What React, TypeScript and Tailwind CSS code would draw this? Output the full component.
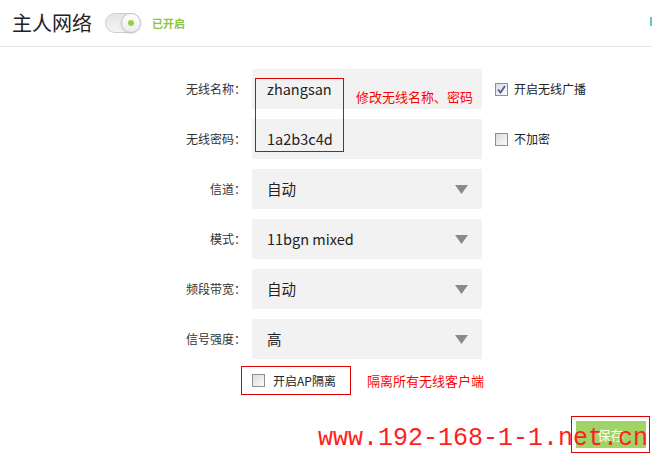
const cjk = { fontFamily: '"Microsoft YaHei", "Noto Sans CJK SC", "Noto Sans", sans-serif' };

function Check({ checked }: { checked?: boolean }) {
  return (
    <span className="inline-flex h-[13px] w-[13px] shrink-0 items-center justify-center border border-[#8e8f8f] bg-gradient-to-br from-[#dcdcdc] to-[#fbfbfb]">
      {checked && (
        <svg width="9" height="9" viewBox="0 0 9 9">
          <path d="M1 4.5 L3.5 7.5 L8 1" fill="none" stroke="#4a5f97" strokeWidth="1.8" />
        </svg>
      )}
    </span>
  );
}

function Arrow() {
  return (
    <svg width="13" height="9" viewBox="0 0 13 9" className="mr-[14px]">
      <path d="M0 0 H13 L6.5 9 Z" fill="#8a8a8a" />
    </svg>
  );
}

function Row({ label, children, side }: { label: string; children: React.ReactNode; side?: React.ReactNode }) {
  return (
    <div className="flex h-10 items-center">
      <div className="w-[246px] text-right text-[12px] text-[#333]">{label}</div>
      <div className="ml-[6px] flex h-10 w-[230px] items-center justify-between bg-[#f2f2f2] pl-[15px] text-[14.5px] text-[#222]">
        {children}
      </div>
      {side && <div className="ml-[13px] flex items-center gap-[6px] text-[12px] text-[#222]">{side}</div>}
    </div>
  );
}

export default function App() {
  return (
    <div className="relative h-[456px] w-[652px] overflow-hidden bg-white" style={cjk}>
      {/* header */}
      <div className="flex h-[47px] items-center border-b border-[#e6e6e6] pl-[12px]">
        <span className="text-[20px] text-[#222]">主人网络</span>
        <span className="relative ml-[13px] h-[20px] w-[36px] rounded-full border border-[#cfcfcf] bg-gradient-to-b from-[#e4e4e4] to-[#f4f4f4]">
          <span className="absolute right-[-1px] top-[-1px] flex h-[20px] w-[20px] items-center justify-center rounded-full border border-[#c8c8c8] bg-gradient-to-b from-white to-[#ececec] shadow-sm">
            <span className="h-[6px] w-[6px] rounded-full bg-[#9ccf3e]" />
          </span>
        </span>
        <span className="ml-[11px] text-[11px] font-bold text-[#8cc63f]">已开启</span>
      </div>
      <div className="absolute right-0 top-[17px] h-[9px] w-[2px] bg-[#6cc0c7]" />

      {/* form */}
      <div className="relative mt-[22px] flex flex-col gap-[10px]">
        <Row label="无线名称：" side={<><Check checked /><span>开启无线广播</span></>}>
          <span>zhangsan</span>
        </Row>
        <Row label="无线密码：" side={<><Check /><span>不加密</span></>}>
          <span>1a2b3c4d</span>
        </Row>
        <Row label="信道：">
          <span>自动</span>
          <Arrow />
        </Row>
        <Row label="模式：">
          <span>11bgn mixed</span>
          <Arrow />
        </Row>
        <Row label="频段带宽：">
          <span>自动</span>
          <Arrow />
        </Row>
        <Row label="信号强度：">
          <span>高</span>
          <Arrow />
        </Row>

        {/* annotation over name/password */}
        <div className="absolute left-[255px] top-[9px] h-[74px] w-[89px] border border-[#e00000]" />
        <div className="absolute left-[356px] top-[18px] text-[13px] text-[#ff0000]">修改无线名称、密码</div>
      </div>

      {/* AP isolation */}
      <div className="mt-[7px] flex items-center">
        <div className="ml-[241px] flex h-[29px] w-[110px] items-center gap-[8px] border border-[#e00000] pl-[10px] text-[12px] text-[#222]">
          <Check />
          <span>开启AP隔离</span>
        </div>
        <span className="ml-[16px] text-[13px] text-[#ff0000]">隔离所有无线客户端</span>
      </div>

      {/* save */}
      <div className="mt-[21px] flex justify-end pr-[2px]">
        <div className="flex h-[37px] w-[79px] items-center justify-center border border-[#e00000]">
          <button className="h-[27px] w-[70px] bg-[#a0d468] text-[13px] text-white">保存</button>
        </div>
      </div>

      {/* watermark */}
      <div
        className="pointer-events-none absolute left-[318px] top-[426px] text-[25px] leading-none text-[#ff1e1e]"
        style={{ fontFamily: '"Liberation Mono", "DejaVu Sans Mono", monospace' }}
      >
        www.192-168-1-1.net.cn
      </div>
    </div>
  );
}
